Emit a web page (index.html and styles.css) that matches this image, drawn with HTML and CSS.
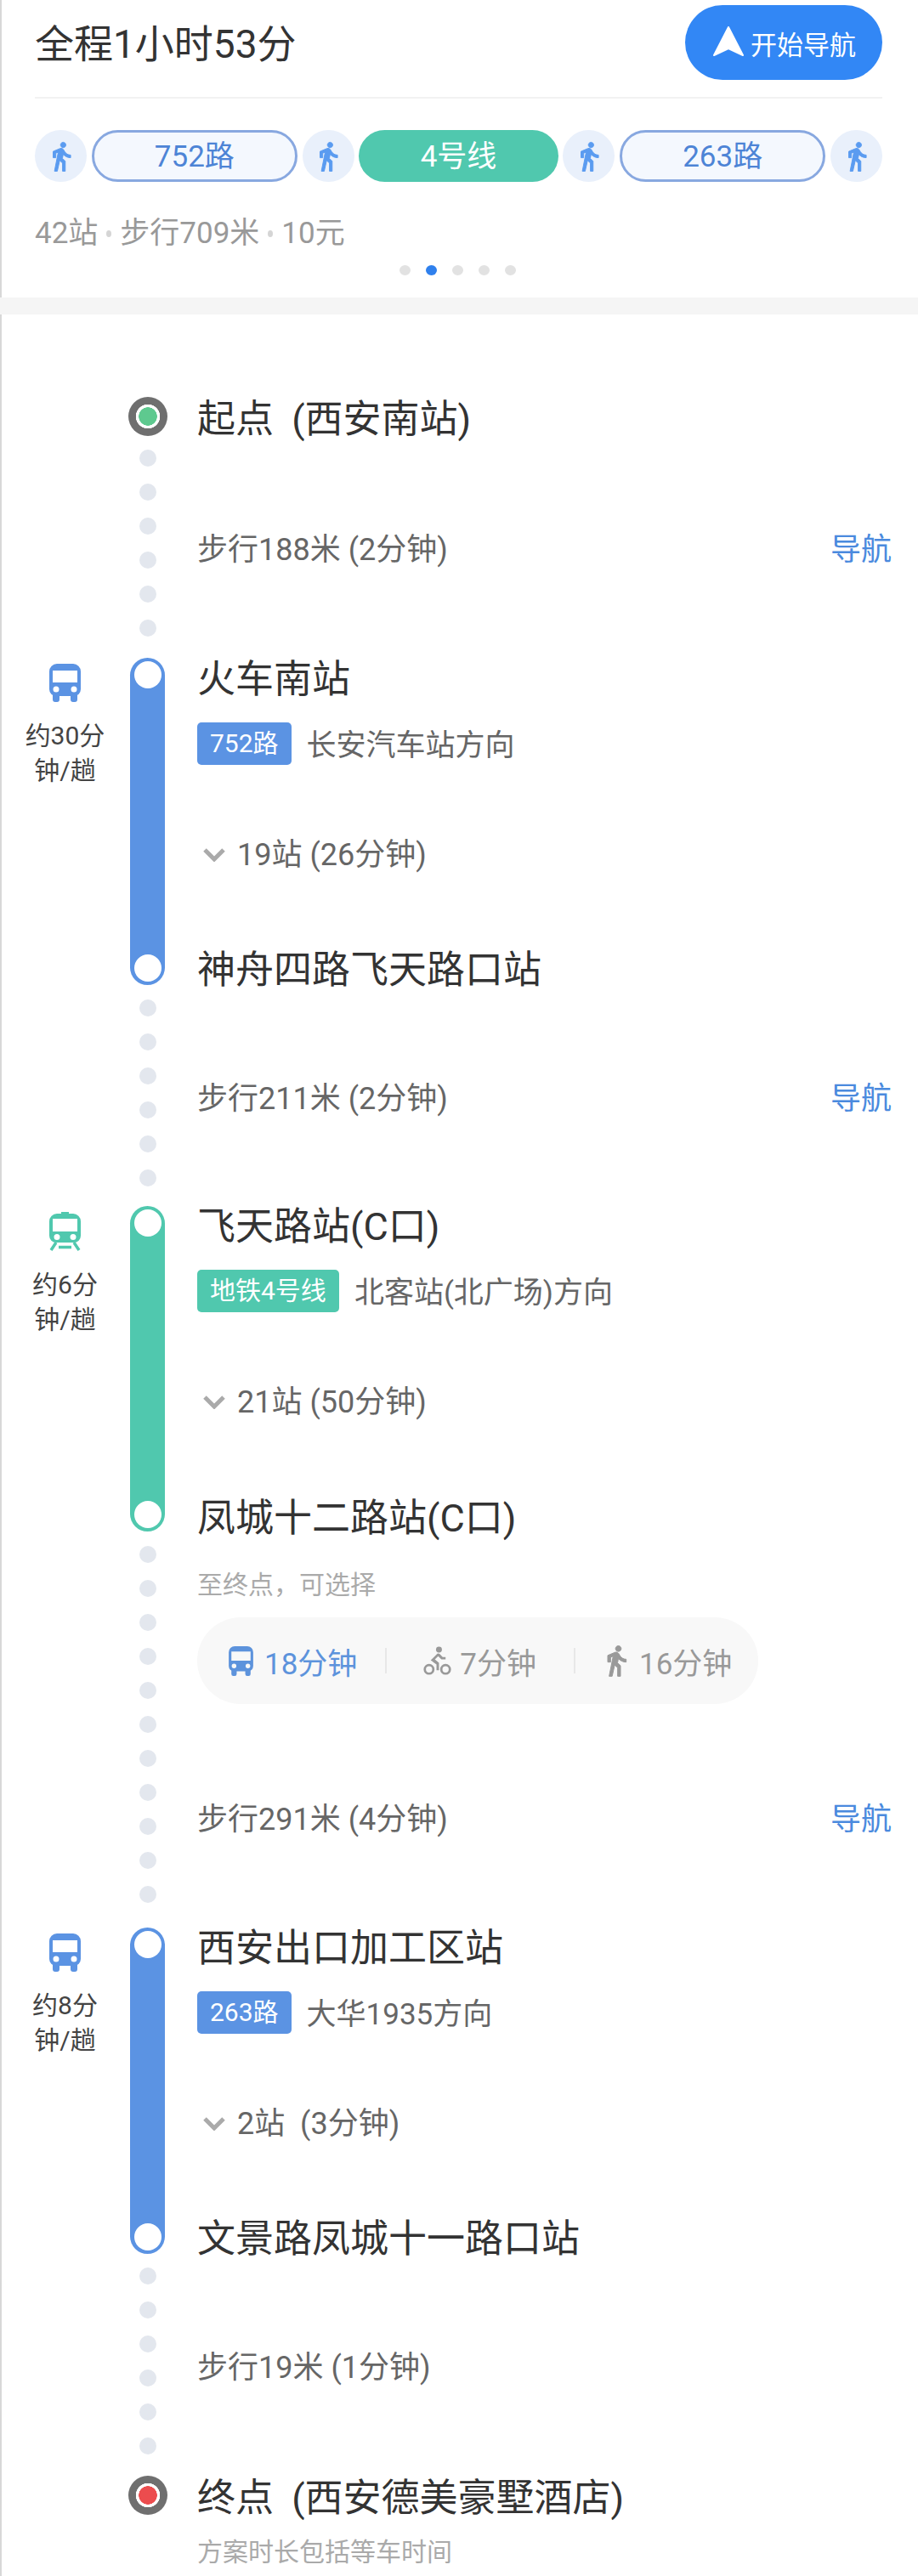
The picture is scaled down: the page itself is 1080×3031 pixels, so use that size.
FILE: index.html
```html
<!DOCTYPE html>
<html>
<head>
	<meta charset="utf-8">
	<title>公交路线详情</title>
	<link rel="stylesheet" href="styles.css">
</head>
<body>
	<svg class="defs" width="0" height="0">
		<symbol id="i-walk" viewBox="0 0 24 24">
			<path fill="currentColor" stroke="currentColor" stroke-width=".6" d="M13.5 5.5c1.1 0 2-.9 2-2s-.9-2-2-2-2 .9-2 2 .9 2 2 2zM9.8 8.9L7 23h2.1l1.8-8 2.1 2v6h2v-7.5l-2.1-2 .6-3C14.8 12 16.8 13 19 13v-2c-1.9 0-3.5-1-4.3-2.4l-1-1.6c-.4-.6-1-1-1.7-1-.3 0-.5.1-.8.1L6 8.3V13h2V9.6l1.8-.7"/>
		</symbol>
		<symbol id="i-bus" viewBox="0 0 37 45">
			<path fill="currentColor" fill-rule="evenodd" d="M9 0H28a9 9 0 0 1 9 9V30a8 8 0 0 1-8 8H8a8 8 0 0 1-8-8V9a9 9 0 0 1 9-9ZM4 8V22H33V8ZM8 26.500a3.500 3.500 0 1 0 0 7 3.500 3.500 0 0 0 0-7ZM29 26.500a3.500 3.500 0 1 0 0 7 3.500 3.500 0 0 0 0-7Z"/>
			<path fill="currentColor" d="M4 36H12V42a3 3 0 0 1-3 3H7a3 3 0 0 1-3-3ZM25 36H33V42a3 3 0 0 1-3 3H28a3 3 0 0 1-3-3Z"/>
		</symbol>
		<symbol id="i-metro" viewBox="0 0 37 46">
			<path fill="currentColor" fill-rule="evenodd" d="M14 0H23V2H28a9 9 0 0 1 9 9V28a8 8 0 0 1-8 8H8a8 8 0 0 1-8-8V11a9 9 0 0 1 9-9H14ZM4 8V23H33V8ZM9 26a3.5 3.5 0 1 0 0 7 3.5 3.5 0 0 0 0-7ZM28 26a3.5 3.5 0 1 0 0 7 3.5 3.5 0 0 0 0-7Z"/>
			<path fill="none" stroke="currentColor" stroke-width="3.5" d="M8 36L2 45M29 36L35 45M11 41.500H26"/>
		</symbol>
		<symbol id="i-bike" viewBox="0 0 34 36">
			<circle cx="19" cy="4" r="3.600" fill="currentColor"/>
			<path fill="currentColor" d="M17 9L9 17L16 22V29H19V20L14 16L18 12L22 16H27V13H23.500L20 9.500Q18.500 8 17 9Z"/>
			<circle cx="7" cy="28" r="5.200" fill="none" stroke="currentColor" stroke-width="2.800"/>
			<circle cx="27" cy="28" r="5.200" fill="none" stroke="currentColor" stroke-width="2.800"/>
		</symbol>
	</svg>

	<div class="page">
		<header class="summary">
			<div class="summary_top">
				<div class="summary_title">全程1小时53分</div>
				<div class="nav_btn">
					<svg width="36" height="35" viewBox="0 0 36 35"><path fill="#fff" stroke="#fff" stroke-width="2" stroke-linejoin="round" d="M18 1L35 34L18 26L1 34Z"/></svg>
					<span>开始导航</span>
				</div>
			</div>
			<div class="steps">
				<span class="step_walk"><svg width="38" height="38"><use href="#i-walk"/></svg></span>
				<span class="step_line">752路</span>
				<span class="step_walk"><svg width="38" height="38"><use href="#i-walk"/></svg></span>
				<span class="step_line step_metro">4号线</span>
				<span class="step_walk"><svg width="38" height="38"><use href="#i-walk"/></svg></span>
				<span class="step_line">263路</span>
				<span class="step_walk"><svg width="38" height="38"><use href="#i-walk"/></svg></span>
			</div>
			<div class="stats">42站<i></i>步行709米<i></i>10元</div>
			<div class="pager">
				<span></span><span class="on"></span><span></span><span></span><span></span>
			</div>
		</header>
		<div class="band"></div>

		<div class="route">
			<div class="seg seg_marker">
				<div class="mode"></div>
				<div class="rail"><span class="marker marker_start"></span></div>
				<div class="body"><div class="name">起点 (西安南站)</div></div>
			</div>

			<div class="seg seg_walk">
				<div class="mode"></div>
				<div class="rail rail_dots"><i></i><i></i><i></i><i></i><i></i><i></i></div>
				<div class="body walk_body">
					<div class="walk_row"><span>步行188米 (2分钟)</span><span class="nav_link">导航</span></div>
				</div>
			</div>

			<div class="seg seg_transit seg_bus">
				<div class="mode">
					<svg width="37" height="45"><use href="#i-bus"/></svg>
					<div class="mode_label">约30分<br>钟/趟</div>
				</div>
				<div class="rail"><div class="bar"><i></i><i></i></div></div>
				<div class="body">
					<div class="name">火车南站</div>
					<div class="line_row"><span class="tag">752路</span><span class="dir">长安汽车站方向</span></div>
					<div class="stops"><svg width="26" height="16" viewBox="0 0 26 16"><path fill="none" stroke="currentColor" stroke-width="5" d="M2 2L13 13L24 2"/></svg>19站 (26分钟)</div>
					<div class="name name_end">神舟四路飞天路口站</div>
				</div>
			</div>

			<div class="seg seg_walk seg_walk_short">
				<div class="mode"></div>
				<div class="rail rail_dots"><i></i><i></i><i></i><i></i><i></i><i></i></div>
				<div class="body walk_body">
					<div class="walk_row"><span>步行211米 (2分钟)</span><span class="nav_link">导航</span></div>
				</div>
			</div>

			<div class="seg seg_transit seg_metro">
				<div class="mode">
					<svg width="37" height="46"><use href="#i-metro"/></svg>
					<div class="mode_label">约6分<br>钟/趟</div>
				</div>
				<div class="rail"><div class="bar"><i></i><i></i></div></div>
				<div class="body">
					<div class="name">飞天路站(C口)</div>
					<div class="line_row"><span class="tag">地铁4号线</span><span class="dir">北客站(北广场)方向</span></div>
					<div class="stops"><svg width="26" height="16" viewBox="0 0 26 16"><path fill="none" stroke="currentColor" stroke-width="5" d="M2 2L13 13L24 2"/></svg>21站 (50分钟)</div>
					<div class="name name_end">凤城十二路站(C口)</div>
				</div>
			</div>

			<div class="seg seg_walk seg_last_mile">
				<div class="mode"></div>
				<div class="rail rail_dots"><i></i><i></i><i></i><i></i><i></i><i></i><i></i><i></i><i></i><i></i><i></i></div>
				<div class="body">
					<div class="hint">至终点，可选择</div>
					<div class="choices">
						<span class="choice choice_on"><svg width="29" height="35"><use href="#i-bus"/></svg>18分钟</span>
						<span class="choice_sep"></span>
						<span class="choice choice_bike"><svg width="33" height="35"><use href="#i-bike"/></svg>7分钟</span>
						<span class="choice_sep"></span>
						<span class="choice choice_walk"><svg width="40" height="40"><use href="#i-walk"/></svg>16分钟</span>
					</div>
					<div class="walk_row"><span>步行291米 (4分钟)</span><span class="nav_link">导航</span></div>
				</div>
			</div>

			<div class="seg seg_transit seg_bus2">
				<div class="mode">
					<svg width="37" height="45"><use href="#i-bus"/></svg>
					<div class="mode_label">约8分<br>钟/趟</div>
				</div>
				<div class="rail"><div class="bar"><i></i><i></i></div></div>
				<div class="body">
					<div class="name">西安出口加工区站</div>
					<div class="line_row"><span class="tag">263路</span><span class="dir">大华1935方向</span></div>
					<div class="stops"><svg width="26" height="16" viewBox="0 0 26 16"><path fill="none" stroke="currentColor" stroke-width="5" d="M2 2L13 13L24 2"/></svg>2站&nbsp; (3分钟)</div>
					<div class="name name_end">文景路凤城十一路口站</div>
				</div>
			</div>

			<div class="seg seg_walk">
				<div class="mode"></div>
				<div class="rail rail_dots"><i></i><i></i><i></i><i></i><i></i><i></i></div>
				<div class="body walk_body">
					<div class="walk_row"><span>步行19米 (1分钟)</span></div>
				</div>
			</div>

			<div class="seg seg_marker">
				<div class="mode"></div>
				<div class="rail"><span class="marker marker_end"></span></div>
				<div class="body">
					<div class="name">终点 (西安德美豪墅酒店)</div>
					<div class="hint hint_end">方案时长包括等车时间</div>
				</div>
			</div>
		</div>
	</div>
</body>
</html>
```

FILE: styles.css
```css
html, body { margin: 0; padding: 0; background: #fff; }
body { font-family: Roboto, "Noto Sans CJK SC", sans-serif; color: #333; }
.defs { position: absolute; }
.page { width: 1080px; height: 3031px; overflow: hidden; box-shadow: inset 2px 0 0 #d8d8d8; }

/* Summary */

.summary { padding: 0 42px 26px 41px; }
.summary_top { display: flex; justify-content: space-between; align-items: center; padding: 6px 0 20px; border-bottom: 2px solid #f2f2f2; }
.summary_title { font-size: 46px; line-height: 60px; color: #333; margin-top: 4px; }
.nav_btn { display: flex; align-items: center; width: 232px; height: 88px; padding-left: 33px; box-sizing: border-box; border-radius: 44px; background: #3287f5; color: #fff; font-size: 31px; }
.nav_btn svg { margin-right: 8px; margin-top: -4px; }
.steps { display: flex; gap: 6px; margin-top: 37px; }
.step_walk { flex: none; display: flex; align-items: center; justify-content: center; width: 61px; height: 61px; border-radius: 50%; background: #e9f0fb; color: #5a9bf0; }
.step_line { flex: 1; height: 61px; box-sizing: border-box; border: 3px solid #88a8e0; border-radius: 31px; background: #f4f8fe; color: #4d84d6; font-size: 35px; line-height: 58px; text-align: center; }
.step_metro { margin: 0 -1px; border: 0; background: #50c8ae; color: #fff; line-height: 64px; }
.stats { display: flex; align-items: center; margin-top: 41px; font-size: 35px; line-height: 40px; color: #999; }
.stats i { width: 6px; height: 8px; margin: 0 10px; border-radius: 50%; background: #d5d5d5; }
.pager { display: flex; justify-content: center; gap: 18px; margin-top: 17px; padding-right: 2px; }
.pager span { width: 13px; height: 12px; border-radius: 50%; background: #e2e2e2; }
.pager .on { background: #2f80ed; }
.band { height: 20px; background: #f5f5f5; }

/* Route */

.route { padding-top: 97px; }
.seg { display: flex; }
.mode { flex: none; width: 153px; text-align: center; padding-top: 7px; }
.rail { flex: none; width: 41px; display: flex; flex-direction: column; align-items: center; }
.body { flex: 1; margin-left: 38px; padding-right: 31px; display: flex; flex-direction: column; }
.name { font-size: 45px; line-height: 38px; padding-top: 7px; white-space: nowrap; word-spacing: 10px; color: #333; }

.seg_marker .mode { padding-top: 0; }
.seg_marker .name { padding-top: 8px; }
.marker { display: block; width: 46px; height: 46px; border-radius: 50%; background: radial-gradient(circle, #5ec98f 0 10.5px, #fff 11px 14px, #6f6f6f 14.5px); }
.marker_end { background: radial-gradient(circle, #ec4c4e 0 10.5px, #fff 11px 14px, #6f6f6f 14.5px); }

.rail_dots { gap: 20px; padding: 16px 0 25px; }
.seg_walk_short .rail_dots { padding: 17px 0 23px; }
.rail_dots i { width: 20px; height: 20px; border-radius: 50%; background: #e3e7ee; }
.walk_body { justify-content: center; padding-top: 7px; }
.walk_row { display: flex; justify-content: space-between; font-size: 36px; line-height: 50px; color: #666; }
.nav_link { color: #4a8ade; }

.seg_bus, .seg_bus2 { color: #5b93e3; }
.seg_metro { color: #50c8ae; }
.seg_bus { height: 385px; }
.seg_metro { height: 383px; }
.seg_bus2 { height: 384px; }
.mode svg { display: block; margin: 0 auto; }
.mode_label { margin-top: 19px; font-size: 30px; line-height: 41px; color: #444; }
.bar { flex: 1; width: 41px; box-sizing: border-box; padding: 4px 0; display: flex; flex-direction: column; align-items: center; justify-content: space-between; border-radius: 21px; background: currentColor; }
.bar i { width: 32px; height: 32px; border-radius: 50%; background: #fff; }
.seg_metro .name, .seg_bus2 .name { padding-top: 6px; }
.line_row { display: flex; align-items: center; margin-top: 31px; height: 50px; }
.tag { height: 50px; padding: 0 15px; border-radius: 5px; background: currentColor; font-size: 30px; line-height: 50px; -webkit-text-fill-color: #fff; }
.dir { margin: -3px 0 0 18px; font-size: 35px; color: #666; }
.stops { display: flex; align-items: center; margin-top: 81px; font-size: 36px; line-height: 50px; color: #666; white-space: pre; }
.seg_metro .stops { margin-top: 81px; }
.stops svg { margin: 0 14px 0 7px; color: #aaa; }
.seg_transit .name_end { margin-top: auto; margin-bottom: -2px; padding-top: 0; }
.seg_metro .name_end { margin-bottom: -4px; }

.seg_last_mile { height: 466px; }
.seg_last_mile .rail_dots { padding: 17px 0 0; }
.seg_last_mile .body { padding-top: 43px; }
.hint { font-size: 30px; line-height: 40px; color: #aaa; }
.hint_end { margin-top: 24px; }
.choices { display: flex; align-items: center; align-self: flex-start; box-sizing: border-box; width: 660px; height: 102px; margin-top: 18px; padding-left: 37px; border-radius: 51px; background: #f8f8f8; }
.choice { display: flex; align-items: center; gap: 13px; font-size: 35px; color: #999; }
.choice_on { color: #5d93dc; }
.choice_sep { width: 2px; height: 30px; margin: 0 43px 0 33px; background: #e8e8e8; }
.choice_bike { margin-right: 11px; }
.choice_bike svg { margin-right: -3px; }
.choice_walk svg { margin-left: -15px; margin-right: -6px; }
.seg_last_mile .walk_row { margin-top: 111px; }
```
